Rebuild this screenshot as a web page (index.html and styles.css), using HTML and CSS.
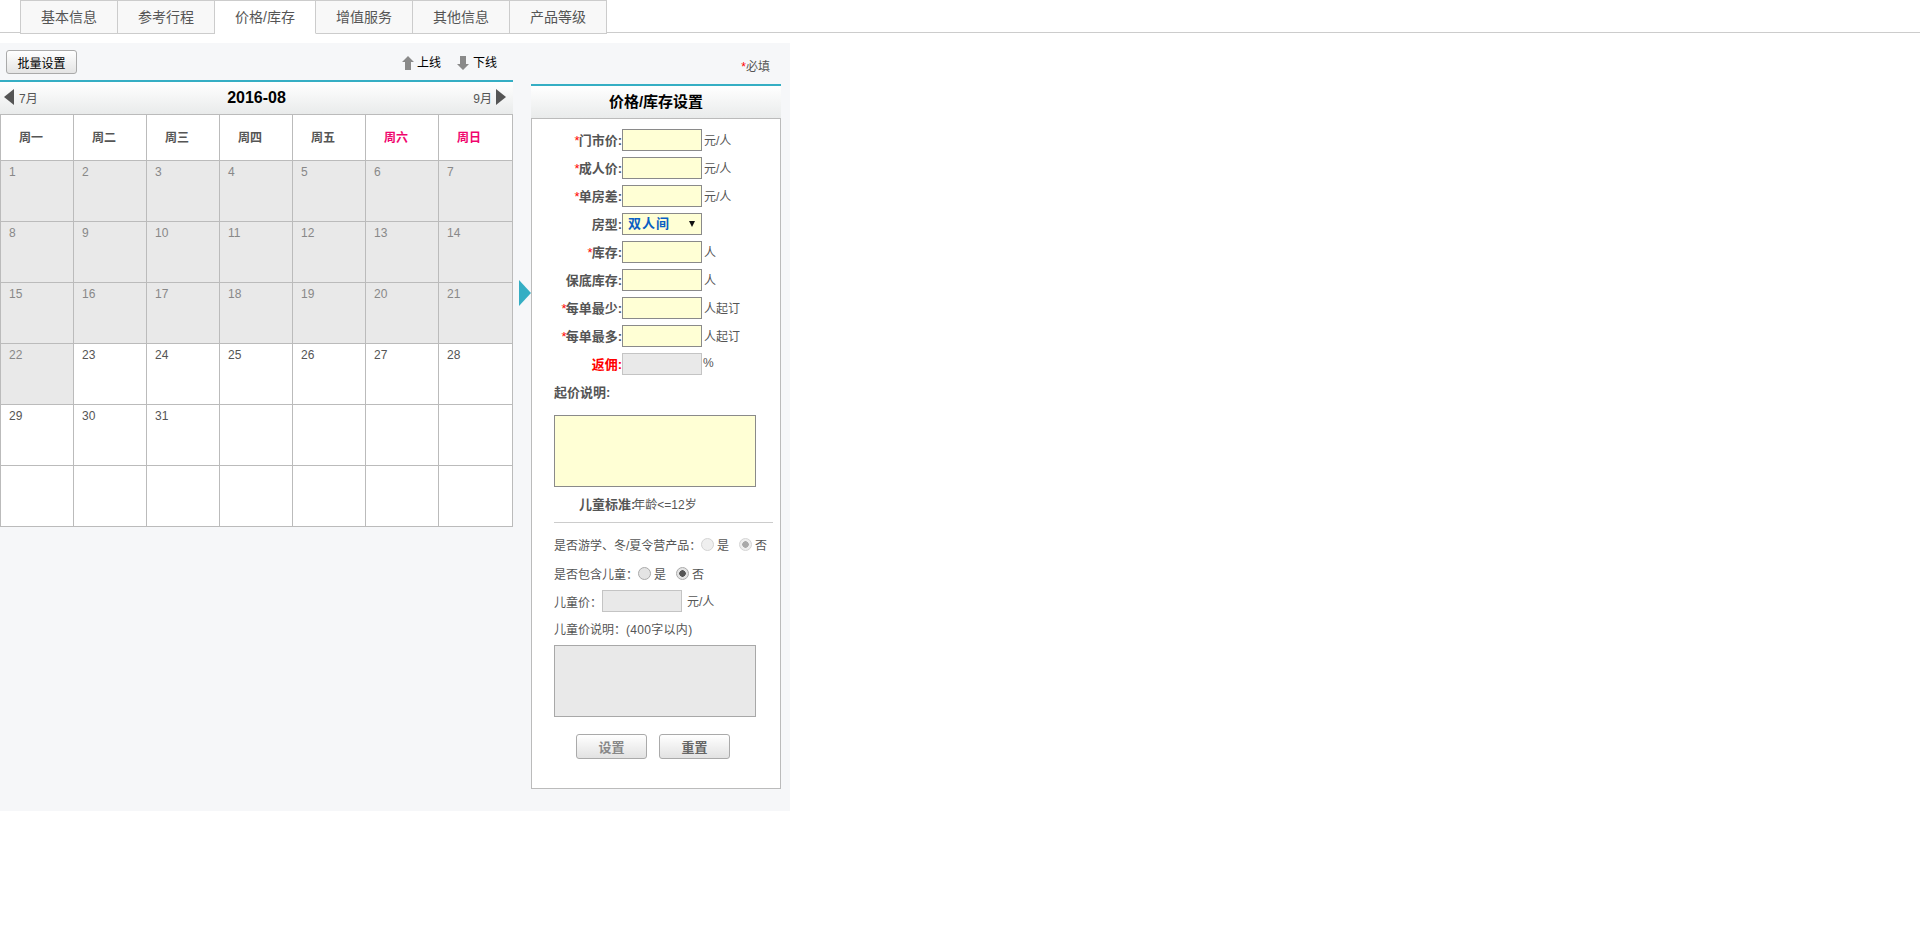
FILE: index.html
```html
<!DOCTYPE html>
<html lang="zh-CN">
<head>
  <meta charset="UTF-8" />
  <title>价格/库存</title>
  <link rel="stylesheet" href="styles.css">
</head>
<body>

  <ul class="tabs">
    <li>基本信息</li>
    <li>参考行程</li>
    <li class="active">价格/库存</li>
    <li>增值服务</li>
    <li>其他信息</li>
    <li>产品等级</li>
  </ul>

  <div class="panel">
    <div class="cal-col">
      <div class="toolbar">
        <button type="button" class="batch-btn">批量设置</button>
        <div class="online">
          <a class="up">
            <svg width="12" height="16" viewBox="0 0 12 16"><path d="M6 1 12 7H9V15H3V7H0Z" fill="#8a8a8a"/></svg>
            上线
          </a>
          <a class="down">
            <svg width="12" height="16" viewBox="0 0 12 16"><path d="M3 1H9V9H12L6 15 0 9H3Z" fill="#8a8a8a"/></svg>
            下线
          </a>
        </div>
      </div>

      <div class="cal-head">
        <a class="prev"><i class="arrow-left"></i>7月</a>
        <b class="month">2016-08</b>
        <a class="next">9月<i class="arrow-right"></i></a>
      </div>

      <table class="cal">
        <tr class="week">
          <th>周一</th><th>周二</th><th>周三</th><th>周四</th><th>周五</th><th class="weekend">周六</th><th class="weekend">周日</th>
        </tr>
        <tr>
          <td class="past">1</td><td class="past">2</td><td class="past">3</td><td class="past">4</td><td class="past">5</td><td class="past">6</td><td class="past">7</td>
        </tr>
        <tr>
          <td class="past">8</td><td class="past">9</td><td class="past">10</td><td class="past">11</td><td class="past">12</td><td class="past">13</td><td class="past">14</td>
        </tr>
        <tr>
          <td class="past">15</td><td class="past">16</td><td class="past">17</td><td class="past">18</td><td class="past">19</td><td class="past">20</td><td class="past">21</td>
        </tr>
        <tr>
          <td class="past">22</td><td>23</td><td>24</td><td>25</td><td>26</td><td>27</td><td>28</td>
        </tr>
        <tr>
          <td>29</td><td>30</td><td>31</td><td></td><td></td><td></td><td></td>
        </tr>
        <tr>
          <td></td><td></td><td></td><td></td><td></td><td></td><td></td>
        </tr>
      </table>
    </div>

    <div class="side-col">
      <i class="pointer"></i>
      <div class="required"><span class="star">*</span>必填</div>
      <h3 class="side-title">价格/库存设置</h3>
      <form class="side-body">
        <div class="row"><label><span class="star">*</span>门市价:</label><input type="text" class="field" /><span class="unit">元/人</span></div>
        <div class="row"><label><span class="star">*</span>成人价:</label><input type="text" class="field" /><span class="unit">元/人</span></div>
        <div class="row"><label><span class="star">*</span>单房差:</label><input type="text" class="field" /><span class="unit">元/人</span></div>
        <div class="row"><label>房型:</label>
          <div class="select-wrap">
            <select class="room">
              <option>双人间</option>
            </select>
          </div>
        </div>
        <div class="row"><label><span class="star">*</span>库存:</label><input type="text" class="field" /><span class="unit">人</span></div>
        <div class="row"><label>保底库存:</label><input type="text" class="field" /><span class="unit">人</span></div>
        <div class="row"><label><span class="star">*</span>每单最少:</label><input type="text" class="field" /><span class="unit">人起订</span></div>
        <div class="row"><label><span class="star">*</span>每单最多:</label><input type="text" class="field" /><span class="unit">人起订</span></div>
        <div class="row"><label class="rebate">返佣:</label><input type="text" class="field off" disabled /><span class="unit pct">%</span></div>

        <div class="note-title">起价说明:</div>
        <textarea class="note"></textarea>
        <div class="child-std"><b>儿童标准:</b>年龄&lt;=12岁</div>
        <div class="divider"></div>

        <div class="opt first">
          <label class="w-study">是否游学、冬/夏令营产品：</label>
          <input type="radio" class="radio faint" name="study" disabled /><span>是</span>
          <input type="radio" class="radio faint gap" name="study" checked disabled /><span>否</span>
        </div>
        <div class="opt">
          <label class="w-child">是否包含儿童：</label>
          <input type="radio" class="radio" name="child" /><span>是</span>
          <input type="radio" class="radio gap" name="child" checked /><span>否</span>
        </div>
        <div class="opt price">
          <label class="w-price">儿童价：</label>
          <input type="text" class="field off" disabled /><span class="unit">元/人</span>
        </div>
        <div class="child-note-title">儿童价说明：<span class="limit">(400字以内)</span></div>
        <textarea class="note off" disabled></textarea>

        <div class="actions">
          <button type="button" class="act set">设置</button>
          <button type="button" class="act">重置</button>
        </div>
      </form>
    </div>
  </div>

</body>
</html>
```

FILE: styles.css
```css
body {
  margin: 0;
  font-family: "Liberation Sans", "Noto Sans CJK SC", sans-serif;
  font-size: 12px;
  color: #555;
  background: #fff;
}
.tabs {
  display: flex;
  height: 32px;
  margin: 0;
  padding: 0 0 0 20px;
  list-style: none;
  border-bottom: 1px solid #ccc;
}
.tabs li {
  box-sizing: border-box;
  width: 97px;
  height: 34px;
  line-height: 33px;
  text-align: center;
  font-size: 14px;
  background: #f8f8f8;
  border: 1px solid #ccc;
  border-left: none;
}
.tabs li:first-child {
  width: 98px;
  border-left: 1px solid #ccc;
}
.tabs .active {
  background: #fff;
  border-bottom-color: #fff;
  width: 101px;
}
.panel {
  display: flex;
  width: 790px;
  height: 768px;
  margin-top: 10px;
  background: #f6f7f9;
}
.cal-col {
  width: 513px;
}
.toolbar {
  display: flex;
  justify-content: space-between;
  align-items: flex-start;
  height: 37px;
  padding: 7px 16px 0 6px;
  box-sizing: border-box;
}
.batch-btn {
  width: 71px;
  height: 24px;
  padding: 0;
  font: 12px "Liberation Sans", "Noto Sans CJK SC", sans-serif;
  color: #000;
  background: linear-gradient(#fff, #e4e4e4);
  border: 1px solid #aaa;
  border-radius: 3px;
}
.online {
  display: flex;
  gap: 16px;
  height: 24px;
  padding-top: 1px;
  line-height: 24px;
  color: #000;
}
.online a {
  display: flex;
  align-items: center;
  gap: 3px;
}
.online .down {
  gap: 4px;
}
.cal-head {
  display: flex;
  justify-content: space-between;
  align-items: center;
  box-sizing: border-box;
  height: 34px;
  padding: 0 7px 2px 4px;
  border-top: 2px solid #35aec4;
  background: linear-gradient(#fff, #e9ebeb);
}
.cal-head a {
  display: flex;
  align-items: center;
  gap: 5px;
}
.cal-head .next {
  gap: 4px;
}
.month {
  margin: 1px 0 0 2px;
  font-size: 16px;
  color: #000;
}
.arrow-left,
.arrow-right {
  width: 0;
  height: 0;
  border-top: 8px solid transparent;
  border-bottom: 8px solid transparent;
}
.arrow-left {
  border-right: 10px solid #555;
}
.arrow-right {
  border-left: 10px solid #555;
}
.cal {
  width: 513px;
  table-layout: fixed;
  border-collapse: collapse;
  background: #fff;
}
.cal th,
.cal td {
  border: 1px solid #bbb;
  padding: 0;
}
.cal th {
  width: 73px;
  height: 42px;
  padding: 0 0 3px 18px;
  box-sizing: border-box;
  text-align: left;
  font-size: 12px;
  color: #555;
}
.cal th:last-child {
  width: auto;
}
.cal .week {
  height: 46px;
}
.cal .weekend {
  color: #f0056e;
}
.cal td {
  height: 61px;
  padding: 3px 0 0 8px;
  box-sizing: border-box;
  vertical-align: top;
  line-height: 16px;
}
.cal .past {
  background: #e9e9e9;
  color: #888;
}
.side-col {
  position: relative;
  width: 250px;
  margin-left: 18px;
}
.pointer {
  position: absolute;
  left: -12px;
  top: 237px;
  border-top: 13px solid transparent;
  border-bottom: 13px solid transparent;
  border-left: 12px solid #35aec4;
}
.required {
  height: 41px;
  line-height: 49px;
  text-align: right;
  padding-right: 11px;
  box-sizing: border-box;
}
.star {
  color: #f00;
  font-weight: normal;
}
.row .star {
  margin-right: -1px;
}
.side-title {
  box-sizing: border-box;
  height: 34px;
  margin: 0;
  line-height: 32px;
  text-align: center;
  font-size: 15px;
  color: #000;
  border-top: 2px solid #35aec4;
  background: linear-gradient(#fff, #e9ebeb);
}
.side-body {
  box-sizing: border-box;
  height: 671px;
  padding-top: 10px;
  background: #fff;
  border: 1px solid #bbb;
}
.row {
  display: flex;
  align-items: center;
  height: 22px;
  margin-bottom: 6px;
}
.row label {
  width: 90px;
  padding-bottom: 2px;
  text-align: right;
  font-weight: bold;
  font-size: 13px;
  white-space: nowrap;
}
.row .rebate {
  color: #f00;
}
.field {
  box-sizing: border-box;
  width: 80px;
  height: 22px;
  margin: 0;
  padding: 0;
  background: #ffffd5;
  border: 1px solid #8a8a8a;
}
.field.off {
  background: #e9e9e9;
  border-color: #c4c4c4;
}
.unit {
  margin-left: 2px;
  padding-bottom: 2px;
}
.unit.pct {
  margin-left: 1px;
}
.select-wrap {
  position: relative;
  width: 80px;
  height: 22px;
}
.select-wrap::after {
  content: "";
  position: absolute;
  right: 7px;
  top: 8px;
  border-top: 6px solid #111;
  border-left: 3px solid transparent;
  border-right: 3px solid transparent;
}
.room {
  appearance: none;
  box-sizing: border-box;
  width: 80px;
  height: 22px;
  margin: 0;
  padding: 0 0 2px 5px;
  font: bold 13px "Liberation Sans", "Noto Sans CJK SC", sans-serif;
  letter-spacing: 1px;
  color: #0a5fc4;
  background: #ffffd5;
  border: 1px solid #8a8a8a;
  border-radius: 0;
}
.note-title {
  height: 18px;
  margin: 9px 0 13px 22px;
  line-height: 18px;
  font-size: 13px;
  font-weight: bold;
}
.note {
  display: block;
  box-sizing: border-box;
  width: 202px;
  height: 72px;
  margin: 0 0 0 22px;
  padding: 0;
  resize: none;
  background: #ffffd5;
  border: 1px solid #8a8a8a;
}
.note.off {
  background: #e9e9e9;
  border-color: #a8a8a8;
}
.child-std {
  height: 18px;
  margin: 9px 0 0 47px;
  line-height: 18px;
}
.child-std b {
  margin-right: -2px;
  font-size: 13px;
}
.divider {
  width: 219px;
  height: 1px;
  margin: 8px 0 0 22px;
  background: #ccc;
}
.opt {
  display: flex;
  align-items: center;
  height: 22px;
  margin: 7px 0 0 22px;
  white-space: nowrap;
}
.opt.first {
  margin-top: 10px;
}
.opt.price {
  margin-top: 6px;
}
.opt span {
  margin-left: 3px;
}
.w-study {
  width: 147px;
}
.w-child {
  width: 84px;
}
.w-price {
  width: 48px;
}
.radio {
  appearance: none;
  box-sizing: border-box;
  width: 13px;
  height: 13px;
  margin: 0;
  border: 1px solid #aaa;
  border-radius: 50%;
  background: #e4e4e4;
}
.radio:checked {
  background: radial-gradient(circle, #555 0 3px, #e4e4e4 3.5px);
}
.radio.faint {
  border-color: #d4d4d4;
  background: #efefef;
}
.radio.faint:checked {
  background: radial-gradient(circle, #aaa 0 3px, #efefef 3.5px);
}
.radio.gap {
  margin-left: 10px;
}
.opt .unit {
  margin-left: 5px;
}
.child-note-title {
  height: 18px;
  margin: 9px 0 6px 22px;
  line-height: 18px;
}
.limit {
  letter-spacing: .3px;
}
.actions {
  display: flex;
  gap: 12px;
  margin: 17px 0 0 44px;
}
.act {
  width: 71px;
  height: 25px;
  padding: 0;
  font: bold 13px "Liberation Sans", "Noto Sans CJK SC", sans-serif;
  color: #666;
  background: linear-gradient(#fff, #e2e2e2);
  border: 1px solid #aaa;
  border-radius: 3px;
}
.act.set {
  color: #888;
}
```
